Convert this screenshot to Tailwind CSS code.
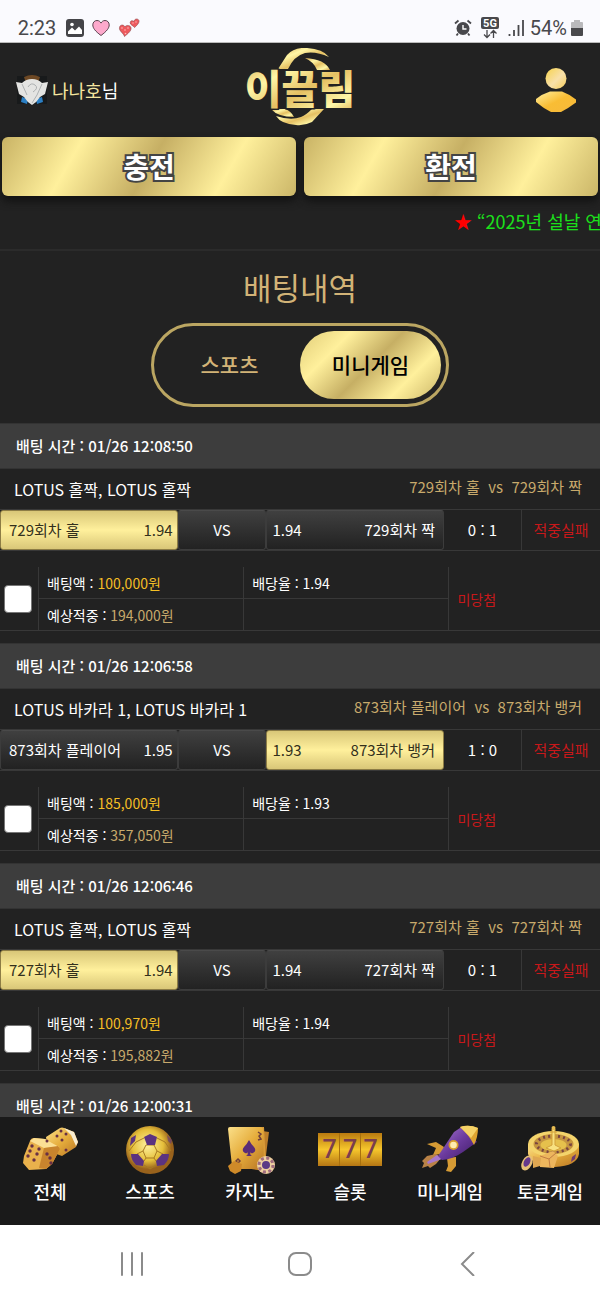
<!DOCTYPE html>
<html lang="ko">
<head>
  <meta charset="UTF-8">
  <title>이끌림 - 배팅내역</title>
  <meta name="viewport" content="width=device-width, initial-scale=1">
  <script src="https://cdn.jsdelivr.net/npm/@tailwindcss/browser@4"></script>
</head>
<body class="flex h-screen flex-col overflow-hidden bg-[#222] font-['Noto_Sans_CJK_KR',sans-serif] text-white">

  <!-- status bar -->
  <div class="flex h-[43px] shrink-0 items-end justify-between border-b border-[#bbb] bg-[#fafafe] px-4 font-[Roboto,sans-serif] text-xl text-[#48484c]">
    <div class="flex items-center gap-2">
      <span class="w-[42px] text-center">2:23</span>
      <svg class="size-[18px]" viewBox="0 0 18 18"><rect width="18" height="18" rx="3" fill="#444448"/><circle cx="6" cy="5.500" r="1.800" fill="#fff"/><path d="M2 15v-2.500l4-4 3 3 4-4 3 3.500V15z" fill="#fff"/></svg>
      <svg class="size-[18px]" viewBox="0 0 18 18"><path d="M9 16.500C3 12 .8 9 .8 5.900.8 3.200 2.700 1.500 5 1.500c1.800 0 3.200 1 4 2.600.8-1.600 2.200-2.600 4-2.600 2.300 0 4.200 1.700 4.200 4.400C17.200 9 15 12 9 16.500z" fill="#fda9cc" stroke="#5a4450"/></svg>
      <svg class="h-[20px] w-[22px]" viewBox="0 0 22 20"><g fill="#ee5a5e" stroke="#8c4448" stroke-width=".6"><path d="M6.500 18.500C5.500 15 .8 13 1.500 9.500c.6-3 4-3.200 5.500-.7 1.800-2.200 5.400-1.600 6 1 .5 3-3 5.700-6.500 8.700z"/><path d="M16.500 9.500c-1.300-2-4.500-2.500-4.300-5 .2-2 2.500-2.300 3.600-.9.400-2.300 2.900-3.400 4.600-1.900C22.500 3.800 19 7.500 16.500 9.500z"/></g><g fill="#fbb"><circle cx="4" cy="10" r=".8"/><circle cx="7" cy="12" r=".8"/><circle cx="10" cy="10" r=".8"/><circle cx="7.500" cy="15.500" r=".8"/><circle cx="15" cy="5" r=".7"/><circle cx="18" cy="4" r=".7"/></g></svg>
    </div>
    <div class="flex items-center gap-[6px] pr-px">
      <svg class="size-[18px]" viewBox="0 0 18 18" fill="none" stroke="#48484c"><circle cx="9" cy="9.500" r="6.500" fill="#48484c" stroke="none"/><path d="M1 4.500 4.500 1.500M13.500 1.500 17 4.500M4 14.500l-1.500 2M14 14.500l1.500 2" stroke-width="1.800"/><path d="M9 6v4h3.500" stroke="#fff" stroke-width="1.400"/></svg>
      <svg class="mx-[3px] h-[22px] w-[18px]" viewBox="0 0 18 22"><rect width="18" height="12" rx="2" fill="#48484c"/><text x="9" y="10" text-anchor="middle" font-family="Roboto" font-size="11" font-weight="700" fill="#fff">5G</text><path d="M6 13v7M3 17.500l3 3 3-3M12.500 21v-7M9.500 16.500l3-3 3 3" fill="none" stroke="#48484c" stroke-width="1.300"/></svg>
      <svg class="h-[18px] w-4" viewBox="0 0 16 18" stroke="#48484c" stroke-width="1.800"><path d="M1.500 15v2M6 11v6M10.500 6v11M15 1v16"/></svg>
      <span class="flex items-center gap-1">54%
        <svg class="h-[18px] w-3" viewBox="0 0 12 18"><path d="M3 1h6v2h2q1 0 1 1v6H0V4q0-1 1-1h2z" fill="#b9b9bc"/><path d="M0 9h12v7q0 1-1 1H1q-1 0-1-1z" fill="#48484c"/></svg>
      </span>
    </div>
  </div>

  <header class="grid h-[94px] shrink-0 grid-cols-3 items-center px-4">
    <div class="flex items-center gap-1 text-lg">
      <svg class="h-8 w-8" viewBox="0 0 32 32">
        <rect x="1" y="2" width="30" height="28" fill="#181a1b"/>
        <path d="M8 3q8-4 16 0l-2 6H10z" fill="#6d4824"/>
        <path d="M6 23l6 2-1 5-6-2zM26 23l-6 2 1 5 6-2z" fill="#2b7fc4"/>
        <path d="M0 8l6 1q4-4 10-4t10 4l6-1-3 12-5 3q-3 5-8 8-5-3-8-8l-5-3z" fill="#e4e4e2"/>
        <path d="M12 13q3-5 7-2t-2 7M6 10l5 11M26 10l-5 11-5 8" fill="none" stroke="#aeb1b2"/>
      </svg>
      <p><span class="text-[#f5e6a0]">나나호</span>님</p>
    </div>
    <a href="#" class="justify-self-center" aria-label="이끌림">
      <svg class="h-[84px] w-[110px]" viewBox="0 2 110 84">
        <defs>
          <linearGradient id="logoGold" x2="1" y2="1"><stop stop-color="#d9a94e"/><stop offset=".3" stop-color="#fff6a6"/><stop offset=".55" stop-color="#e5c063"/><stop offset=".8" stop-color="#fff8a8"/><stop offset="1" stop-color="#d2a045"/></linearGradient>
        </defs>
        <g fill="url(#logoGold)">
          <path d="M33 23 42 9Q49 1 62 2q16 1 22 9-13-6-24-4-11 3-17 16z"/>
          <path d="M60 12q20 1 25 12H72q-3-8-12-12z"/>
          <path d="M79 63 67 76Q59 80 51 79q-15-1-20-9 15 5 25 1 5-2 11-8z"/>
          <path d="M26 63h14q6 2 9 8-16 0-23-8z"/>
        </g>
        <text x="55" y="58" text-anchor="middle" font-family="Noto Sans CJK KR" font-size="40" font-weight="900" fill="url(#logoGold)" stroke="#222" stroke-width="3" paint-order="stroke">이끌림</text>
      </svg>
    </a>
    <button class="mr-2 justify-self-end" aria-label="내 정보">
      <svg class="h-11 w-10" viewBox="0 0 40 44">
        <defs>
          <linearGradient id="head" x2="1" y2="1"><stop stop-color="#f6d24a"/><stop offset=".55" stop-color="#f8e0aa"/><stop offset="1" stop-color="#f6cd58"/></linearGradient>
          <linearGradient id="torso" x2="1" y2="1"><stop stop-color="#fff0a0"/><stop offset=".5" stop-color="#f9bd34"/><stop offset="1" stop-color="#f6b93c"/></linearGradient>
        </defs>
        <circle cx="20" cy="10.500" r="10.500" fill="url(#head)"/>
        <path d="M14 23.500h12q8 3 14 8v3q-8 6-15 9.500H15Q7 40 0 34v-3q6-5 14-7.500z" fill="url(#torso)"/>
      </svg>
    </button>
  </header>

  <div class="grid shrink-0 grid-cols-2 gap-2 px-[2px]">
    <button class="h-[59px] rounded-md bg-[linear-gradient(120deg,#c9b365,#fff09c_25%,#c6af64_50%,#fff09c_75%,#cbb668)] pb-px text-[28px] font-bold shadow-[0_5px_8px_#111] [-webkit-text-stroke:4px_#444] [paint-order:stroke_fill]">충전</button>
    <button class="h-[59px] rounded-md bg-[linear-gradient(120deg,#c9b365,#fff09c_25%,#c6af64_50%,#fff09c_75%,#cbb668)] pb-px text-[28px] font-bold shadow-[0_5px_8px_#111] [-webkit-text-stroke:4px_#444] [paint-order:stroke_fill]">환전</button>
  </div>

  <!-- notice ticker -->
  <div class="h-[55px] shrink-0 overflow-hidden border-b-2 border-[#2b2b2b] pt-[11px] pl-[454px] text-lg whitespace-nowrap text-[#1be01b]">
    <span class="text-[#f00]">★</span> “2025년 설날 연
  </div>

  <main class="min-h-0 flex-1 overflow-hidden">
    <h1 class="pt-[14px] text-center text-[31px] leading-[44px] text-[#d2b377]">배팅내역</h1>
    <div class="mx-auto mt-[14px] flex h-[84px] w-[298px] items-stretch rounded-full border-3 border-[#bba662] p-[5px] text-[21px] font-medium">
      <button class="flex-1 text-[#d2b377]">스포츠</button>
      <button class="flex-1 rounded-full bg-[linear-gradient(135deg,#e0cc78,#fff09c_25%,#c6af64_50%,#fff09c_75%,#cbb668)] text-black">미니게임</button>
    </div>
    <div id="betList" class="mt-4"></div>
  </main>

  <nav class="grid h-[108px] shrink-0 grid-cols-6 bg-[#1a1a1a] pt-2 text-center text-lg font-medium">
    <svg class="absolute size-0" aria-hidden="true">
      <defs>
        <linearGradient id="gold" x2="1" y2="1"><stop stop-color="#fbe08a"/><stop offset=".5" stop-color="#e6ad3c"/><stop offset="1" stop-color="#b87524"/></linearGradient>
        <radialGradient id="ball" cx=".45" cy=".4"><stop stop-color="#fff3a0"/><stop offset=".65" stop-color="#e5bf3a"/><stop offset="1" stop-color="#99621c"/></radialGradient>
        <linearGradient id="slot" y2="1" x2="0"><stop stop-color="#b97a10"/><stop offset=".5" stop-color="#f6c62c"/><stop offset="1" stop-color="#b57614"/></linearGradient>
        <linearGradient id="purple" x2="1" y2="1"><stop stop-color="#a67ad2"/><stop offset=".5" stop-color="#6b3a9d"/><stop offset="1" stop-color="#3d1b63"/></linearGradient>
      </defs>
    </svg>
    <a href="#" class="flex flex-col items-center gap-[2px]">
      <svg class="h-[50px] w-16" viewBox="0 0 64 50">
        <path d="M28 12 42 3q2-1 4 0l10 4 4 10-2 5-14 9-14-5z" fill="url(#gold)"/>
        <path d="m46 3 10 4 4 10-2 4-5-11z" fill="#f8ecd0"/>
        <path d="M6 31 12 16q1-3 4-3l11 1 13 7 2 3-8 15-6 5-17 1-6-7z" fill="#e9b14c"/>
        <path d="m12 16 4-3 11 1 14 8-15 1z" fill="#fbdf94"/>
        <path d="m26 23 14-2 2 3-8 15-6 5-7-1z" fill="#c8842d"/>
        <g fill="#683044"><circle cx="14" cy="21" r="1.700"/><circle cx="21" cy="24" r="1.700"/><circle cx="12" cy="26" r="1.700"/><circle cx="19" cy="29" r="1.700"/><circle cx="10" cy="31" r="1.700"/><circle cx="16" cy="35" r="1.700"/><circle cx="29" cy="29" r="1.700"/><circle cx="32" cy="33" r="1.700"/><circle cx="33" cy="38" r="1.700"/><circle cx="43" cy="6" r="1.500"/><circle cx="48" cy="9" r="1.500"/><circle cx="39" cy="11" r="1.500"/><circle cx="44" cy="15" r="1.500"/><circle cx="29" cy="16" r="1.500"/><circle cx="48" cy="25" r="1.500"/></g>
      </svg>전체</a>
    <a href="#" class="flex flex-col items-center gap-[2px]">
      <svg class="h-[50px] w-16" viewBox="0 0 64 50">
        <circle cx="32" cy="25" r="24" fill="url(#ball)"/>
        <g fill="none" stroke="#a87b22"><path d="M28 20l-3 6 3 7h8l3-7-3-6zM26 13l-8 4M39 13l8 4M25 26l-6 3M39 26l6 3M28 33l-2 3M36 33l2 3M18 17l-7 9M47 17l6 9M26 40l6 4 6-4"/></g>
        <g fill="#5b3380"><path d="m26 12 6-3 7 3-2 8h-8z"/><path d="m13 29 7 0 6 7-1 5-7-1q-5-5-5-11z"/><path d="m51 29-7 0-6 7 1 5 7-1q5-5 5-11z"/><path d="m13 13 5-3-1 6-5 5z"/><path d="m49 10 5 5-1 4-3-3z" opacity=".6"/></g>
      </svg>스포츠</a>
    <a href="#" class="flex flex-col items-center gap-[2px]">
      <svg class="h-[50px] w-16" viewBox="0 0 64 50">
        <path d="m25 3 26 4-5 39-25-4z" fill="#bd7e2a"/>
        <path d="m18 3 28-1 2 38-27 1z" fill="#d99b38"/>
        <path d="M10 4q0-2 2-2h30q3 0 3 3l1 36q0 3-3 3H18q-3 0-4-3z" fill="url(#gold)"/>
        <path d="M31 15q2 4 5 7 3 4-1 6-2 1-3-1 0 3 2 4h-6q2-1 2-4-1 2-3 1-4-2-1-6 3-3 5-7z" fill="#5a2c77"/>
        <path d="M40 7l3 2-2 2 2 3-3 1M20 34l2 2-2 2-2-2z" stroke="#71403a" stroke-width="1.500" fill="none"/>
        <path d="m10 41 6-5 8 3-1 7-6 3-5-3z" fill="#cf8a29"/>
        <circle cx="48" cy="40" r="9" fill="#eed0a0"/><circle cx="48" cy="40" r="7" fill="none" stroke="#a06c7e" stroke-width="3" stroke-dasharray="3 2.500"/><circle cx="48" cy="40" r="4" fill="#5b3a86"/>
      </svg>카지노</a>
    <a href="#" class="flex flex-col items-center gap-[2px]">
      <svg class="h-[50px] w-16" viewBox="0 0 64 50">
        <rect y="8" width="64" height="33" fill="url(#slot)"/><path d="M21.500 8v33M42.500 8v33" stroke="#a8700e"/>
        <g fill="#7b3e4e" font-family="Roboto" font-size="25" font-weight="500" text-anchor="middle"><text x="11.500" y="33">7</text><text x="32" y="33">7</text><text x="52.500" y="33">7</text></g>
      </svg>슬롯</a>
    <a href="#" class="flex flex-col items-center gap-[2px]">
      <svg class="h-[50px] w-16" viewBox="0 0 64 50">
        <path d="m26 22-8-5-9 2 9 4-3 7 9-1zM29 33l9-1v9l-5 6-5-1 2-5z" fill="#d69b34"/>
        <path d="m18 29-9 2-5 5 2 2-2 5 6-2 2 2 6-4 5-6z" fill="#b98247"/>
        <path d="m19 30-10 7 1 2 14-5z" fill="#a777cc"/>
        <path d="M20 31 36 7 45 1 59 17 45 27q-10 7-21 8z" fill="url(#purple)"/>
        <path d="M42 2q9-3 18 1 0 9-4 17-5-10-14-18z" fill="#dea430"/><path d="M42 2q9-3 18 1l-7 10z" fill="#f5d267"/>
        <circle cx="35.500" cy="20" r="5" fill="#d99d2d"/><circle cx="35.500" cy="20" r="3.300" fill="#ffeab0"/>
      </svg>미니게임</a>
    <a href="#" class="flex flex-col items-center gap-[2px]">
      <svg class="h-[50px] w-16" viewBox="0 0 64 50">
        <path d="M10 19v10q4 12 27 13 22-1 24-13V19z" fill="url(#gold)"/>
        <ellipse cx="35.500" cy="19" rx="25.500" ry="13" fill="#f4d46c"/>
        <ellipse cx="35.500" cy="19" rx="20" ry="10" fill="#c59540"/>
        <ellipse cx="35.500" cy="19" rx="17" ry="8" fill="none" stroke="#7a4440" stroke-width="3" stroke-dasharray="2 3"/>
        <ellipse cx="35.500" cy="20" rx="13" ry="6" fill="#e6c04c"/>
        <path d="M34 20V4h3v16l6 3-7 3-8-3zM32 7h7" fill="#f8e180" stroke="#d3a13b"/>
        <circle cx="35.500" cy="3" r="2" fill="#e8bd52"/>
        <path d="m22 31 13-5 5 5-4 12-14-1z" fill="#edb65d"/><path d="m22 31 9 3 7-6M31 34l1 8" stroke="#c17d43" fill="none"/>
        <ellipse cx="9" cy="38" rx="5" ry="8" transform="rotate(28 9 38)" fill="#e6bf78"/><ellipse cx="9" cy="37" rx="3" ry="5" transform="rotate(28 9 37)" fill="#65388c"/>
        <path d="m15 31 8 2-1 8-7 2z" fill="#dfa752"/><path d="m54 32 4-3-1 5-4 3z" fill="#6e3b71"/>
      </svg>토큰게임</a>
  </nav>

  <!-- android keys -->
  <div class="flex h-[75px] shrink-0 items-center justify-around bg-white px-12 pt-[3px]">
    <button aria-label="최근 앱"><svg class="h-6 w-6" viewBox="0 0 24 24" stroke="#8b8b8b" stroke-width="2" stroke-linecap="round"><path d="M2 1v22M12 1v22M22 1v22"/></svg></button>
    <button aria-label="홈"><svg class="h-6 w-6" viewBox="0 0 24 24" fill="none" stroke="#8b8b8b" stroke-width="2"><rect x="1" y="1" width="22" height="22" rx="7"/></svg></button>
    <button aria-label="뒤로"><svg class="h-6 w-6" viewBox="0 0 24 24" fill="none" stroke="#8b8b8b" stroke-width="2"><path d="M18 0 6 12l12 12"/></svg></button>
  </div>

  <script>
    const bets = [
      { time: "01/26 12:08:50", game: "LOTUS 홀짝", home: "729회차 홀", away: "729회차 짝", homeOdds: "1.94", awayOdds: "1.94", pick: "home", score: "0 : 1", amount: "100,000", expected: "194,000", rate: "1.94" },
      { time: "01/26 12:06:58", game: "LOTUS 바카라 1", home: "873회차 플레이어", away: "873회차 뱅커", homeOdds: "1.95", awayOdds: "1.93", pick: "away", score: "1 : 0", amount: "185,000", expected: "357,050", rate: "1.93" },
      { time: "01/26 12:06:46", game: "LOTUS 홀짝", home: "727회차 홀", away: "727회차 짝", homeOdds: "1.94", awayOdds: "1.94", pick: "home", score: "0 : 1", amount: "100,970", expected: "195,882", rate: "1.94" },
      { time: "01/26 12:00:31" }
    ];
    const picked = "bg-linear-to-b from-[#d9c778] via-[#fff09c] to-[#d9c778] border-[#8d7d45] text-[#33301c]";
    const normal = "bg-linear-to-b from-[#404040] to-[#222] border-[#3c3c3c] border-t-[#4a4a4a]";

    let html = "";
    bets.forEach((bet, i) => {
      html += `<h2 class="h-[46px] border-y border-[#333] bg-[#3d3d3d] px-4 text-[15px] leading-[44px] font-medium">배팅 시간 : ${bet.time}</h2>`;
      // details not loaded yet
      if (!bet.game) return;
      html += `
        <div class="pb-3">
          <div class="flex h-10 justify-between pr-[18px] pl-[14px]">
            <p class="text-base leading-[40px]">${bet.game}, ${bet.game}</p>
            <p class="text-[15px] leading-[36px] text-[#c8aa6c]">${bet.home} &nbsp;vs&nbsp; ${bet.away}</p>
          </div>
          <table class="h-[42px] w-full table-fixed border-separate border-spacing-0 border-y border-[#383838] text-[15px]">
            <tr>
              <td class="w-[29.6%] p-0"><div class="flex h-10 items-center justify-between rounded-[3px] border pr-1 pl-2 ${bet.pick === "home" ? picked : normal}"><span>${bet.home}</span><span>${bet.homeOdds}</span></div></td>
              <td class="w-[14.8%] p-0"><div class="h-10 rounded-[3px] border text-center leading-[38px] ${normal}">VS</div></td>
              <td class="w-[29.6%] p-0"><div class="flex h-10 items-center justify-between rounded-[3px] border pr-2 pl-[5px] ${bet.pick === "away" ? picked : normal}"><span>${bet.awayOdds}</span><span>${bet.away}</span></div></td>
              <td class="w-[13%] border-r border-[#383838] p-0 text-center">${bet.score}</td>
              <td class="p-0 text-center text-[#c8181a]">적중실패</td>
            </tr>
          </table>
          <table class="mt-4 h-16 w-full table-fixed border-separate border-spacing-0 border-b border-[#383838] text-sm">
            <tr class="h-8">
              <td rowspan="2" class="w-[39px] border-r border-[#383838] p-0 pl-1"><input type="checkbox" id="bet${i}" aria-label="${bet.time} 선택" class="block size-7 appearance-none rounded-[4px] border border-[#777] bg-white"></td>
              <td class="w-[34.2%] border-r border-b border-[#383838] p-0 pl-2"><label for="bet${i}">배팅액 : <span class="text-[#f5bf25]">${bet.amount}원</span></label></td>
              <td class="w-[34.2%] border-r border-b border-[#383838] p-0 pl-2">배당율 : ${bet.rate}</td>
              <td rowspan="2" class="p-0 pl-2 text-[#c8181a]">미당첨</td>
            </tr>
            <tr>
              <td class="border-r border-[#383838] p-0 pl-2">예상적중 : <span class="text-[#c8aa6c]">${bet.expected}원</span></td>
              <td class="border-r border-[#383838] p-0"></td>
            </tr>
          </table>
        </div>
      `;
    });
    document.getElementById("betList").innerHTML = html;
  </script>
</body>
</html>
